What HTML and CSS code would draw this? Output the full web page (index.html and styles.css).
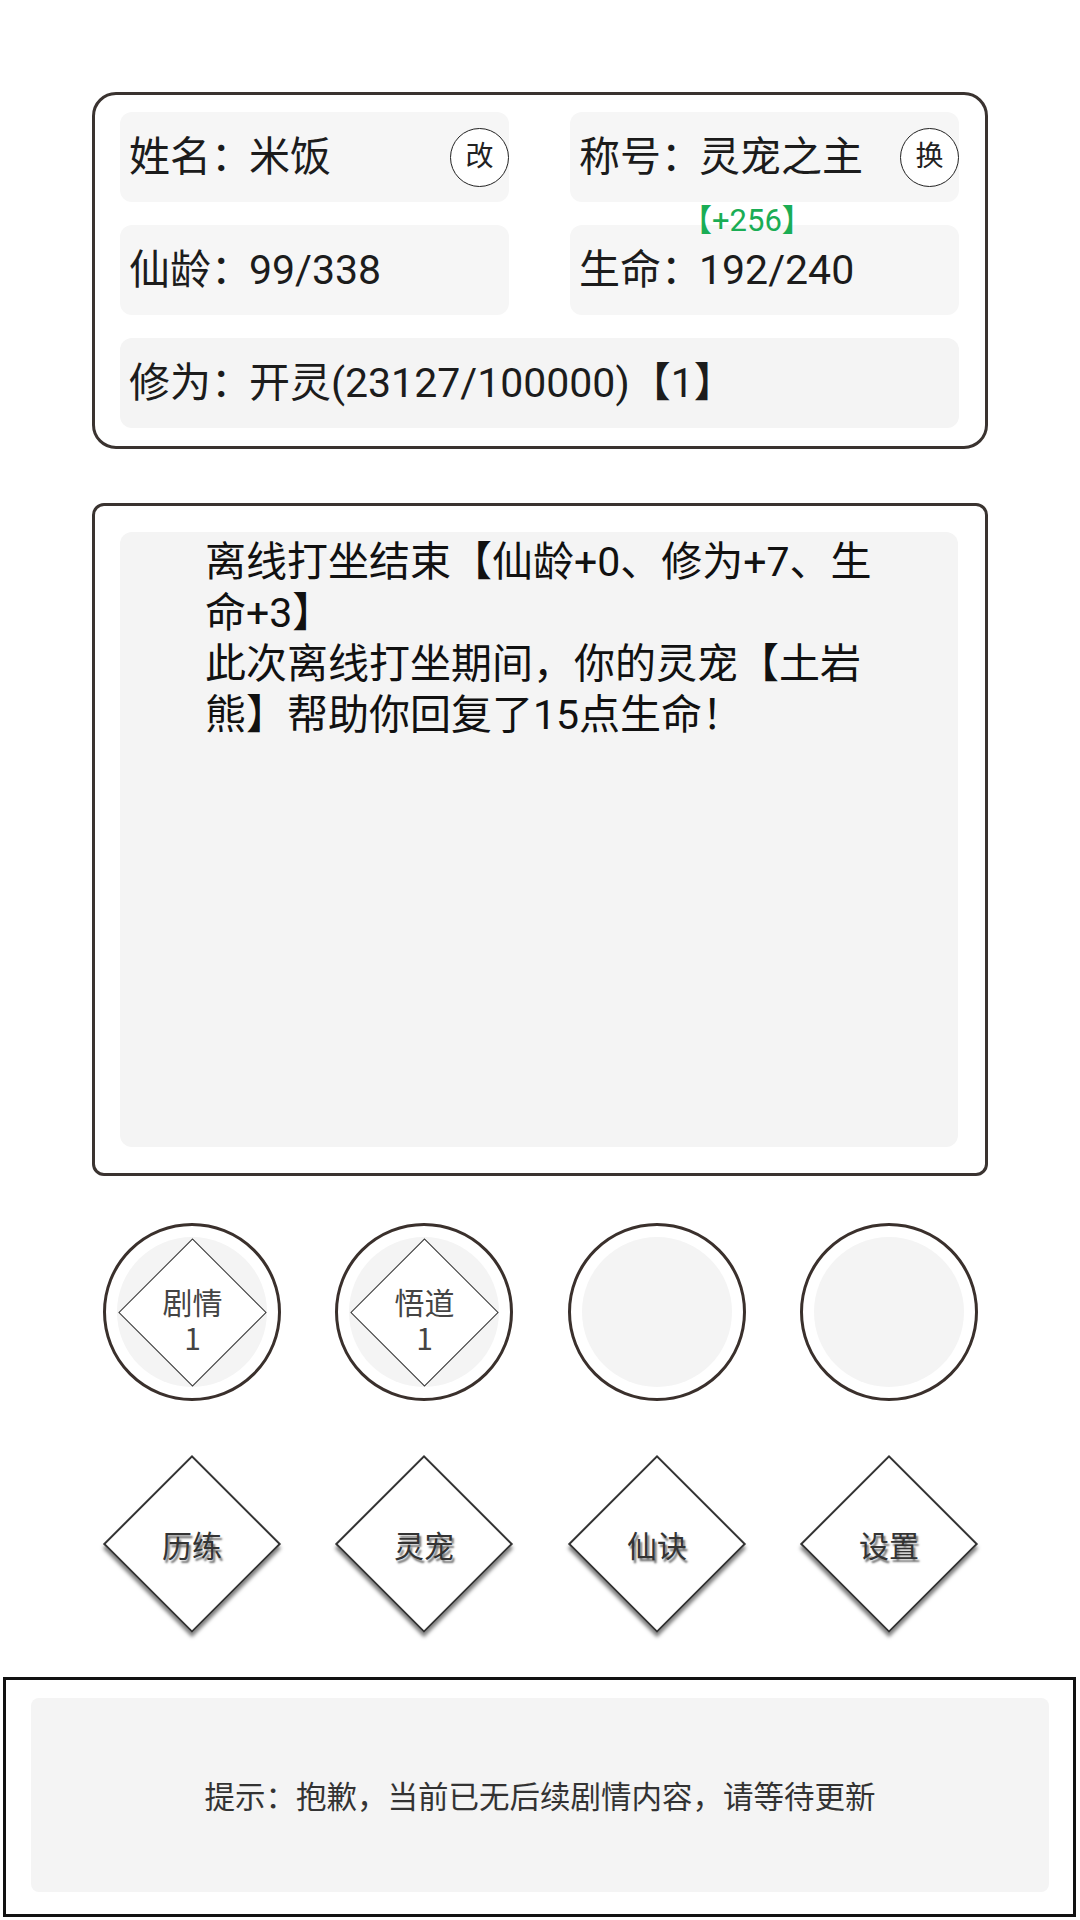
FILE: index.html
```html
<!DOCTYPE html>
<html lang="zh-CN">
<head>
<meta charset="utf-8">
<title>修仙</title>
<link rel="stylesheet" href="styles.css">
</head>
<body>
<div class="page">
  <section class="info-card">
    <div class="cell">
      <span class="label">姓名<span class="colon">：</span>米饭</span>
      <span class="mini-btn">改</span>
    </div>
    <div class="cell">
      <span class="label">称号<span class="colon">：</span>灵宠之主</span>
      <span class="mini-btn">换</span>
    </div>
    <div class="cell">
      <span class="label">仙龄<span class="colon">：</span>99/338</span>
    </div>
    <div class="cell cell-life">
      <span class="bonus">【+256】</span>
      <span class="label">生命<span class="colon">：</span>192/240</span>
    </div>
    <div class="cell cell-wide">
      <span class="label">修为<span class="colon">：</span>开灵(23127/100000)【1】</span>
    </div>
  </section>

  <section class="log-card">
    <div class="log-inner">
      <div class="log-text">
        <p>离线打坐结束【仙龄+0、修为+7、生命+3】</p>
        <p>此次离线打坐期间，你的灵宠【土岩熊】帮助你回复了15点生命！</p>
      </div>
    </div>
  </section>

  <div class="ring-row">
    <div class="ring">
      <div class="disk">
        <div class="gem"><div class="gem-text"><span>剧情</span><span>1</span></div></div>
      </div>
    </div>
    <div class="ring">
      <div class="disk">
        <div class="gem"><div class="gem-text"><span>悟道</span><span>1</span></div></div>
      </div>
    </div>
    <div class="ring"><div class="disk"></div></div>
    <div class="ring"><div class="disk"></div></div>
  </div>

  <div class="menu-row">
    <div class="menu-item"><div class="menu-diamond"><span class="menu-label">历练</span></div></div>
    <div class="menu-item"><div class="menu-diamond"><span class="menu-label">灵宠</span></div></div>
    <div class="menu-item"><div class="menu-diamond"><span class="menu-label">仙诀</span></div></div>
    <div class="menu-item"><div class="menu-diamond"><span class="menu-label">设置</span></div></div>
  </div>

  <section class="tip-box">
    <div class="tip-inner">提示：抱歉，当前已无后续剧情内容，请等待更新</div>
  </section>
</div>
</body>
</html>
```

FILE: styles.css
```css
* {
  box-sizing: border-box;
}

html, body {
  margin: 0;
  padding: 0;
  background: #ffffff;
}

body {
  width: 1080px;
  height: 1920px;
  overflow: hidden;
  font-family: Roboto, "Noto Sans CJK SC", sans-serif;
  color: #1c1c1c;
}

.page {
  padding-top: 92px;
}

/* ---------- info card ---------- */
.info-card {
  margin: 0 92px;
  width: 896px;
  border: 3px solid #3a3330;
  border-radius: 24px;
  padding: 17px 26px 18px 25px;
  display: grid;
  grid-template-columns: 389px 389px;
  grid-auto-rows: 90px;
  column-gap: 61px;
  row-gap: 23px;
}

.cell {
  position: relative;
  background: #f6f6f6;
  border-radius: 12px;
  padding-left: 9px;
  display: flex;
  align-items: center;
  justify-content: space-between;
}

.cell-wide {
  grid-column: 1 / 3;
  background: #f4f4f4;
}

.label {
  font-size: 41px;
  line-height: 50px;
  white-space: nowrap;
}

.colon {
  letter-spacing: -3px;
}

.mini-btn {
  width: 59px;
  height: 59px;
  border: 1.5px solid #222;
  border-radius: 50%;
  font-size: 28px;
  line-height: 56px;
  text-align: center;
  color: #222;
  background: #ffffff;
}

.bonus {
  position: absolute;
  left: 111px;
  top: -20px;
  font-size: 31px;
  line-height: 31px;
  color: #1aad55;
  white-space: nowrap;
}

/* ---------- log card ---------- */
.log-card {
  margin: 54px 92px 0;
  width: 896px;
  height: 673px;
  border: 3px solid #3a3330;
  border-radius: 12px;
  padding: 26px 27px 26px 25px;
}

.log-inner {
  height: 100%;
  background: #f4f4f4;
  border-radius: 12px;
  padding: 5px 0 0 85px;
}

.log-text {
  width: 684px;
  font-size: 41px;
  line-height: 51px;
  color: #111;
}

.log-text p {
  margin: 0;
}

/* ---------- ring buttons ---------- */
.ring-row {
  margin-top: 47px;
  padding-left: 103px;
  display: flex;
  gap: 54.3px;
}

.ring {
  width: 178px;
  height: 178px;
  border: 3px solid #3a302c;
  border-radius: 50%;
  display: flex;
  align-items: center;
  justify-content: center;
}

.disk {
  width: 150px;
  height: 150px;
  border-radius: 50%;
  background: #f4f4f4;
  display: flex;
  align-items: center;
  justify-content: center;
}

.gem {
  width: 105px;
  height: 105px;
  background: #ffffff;
  border: 1.5px solid #333;
  transform: rotate(45deg);
  display: flex;
  align-items: center;
  justify-content: center;
}

.gem-text {
  transform: rotate(-45deg);
  display: flex;
  flex-direction: column;
  align-items: center;
  font-size: 30px;
  line-height: 36px;
  color: #444;
  margin: 8px 0 0 8px;
  font-family: "Noto Sans CJK SC", sans-serif;
}

/* ---------- menu diamonds ---------- */
.menu-row {
  margin-top: 54px;
  padding-left: 103px;
  display: flex;
  gap: 54.3px;
}

.menu-item {
  width: 178px;
  height: 178px;
  display: flex;
  align-items: center;
  justify-content: center;
}

.menu-diamond {
  width: 126px;
  height: 126px;
  background: #ffffff;
  border: 2px solid #333;
  box-shadow: 3px 3px 4px rgba(0, 0, 0, 0.5);
  transform: rotate(45deg);
  display: flex;
  align-items: center;
  justify-content: center;
}

.menu-label {
  transform: rotate(-45deg);
  font-size: 30px;
  font-weight: 400;
  color: #333;
  text-shadow: 2px 3px 2px rgba(0, 0, 0, 0.55);
  white-space: nowrap;
  font-family: "Noto Sans CJK SC", sans-serif;
}

/* ---------- tip box ---------- */
.tip-box {
  margin: 44px 0 0 3px;
  width: 1073px;
  height: 240px;
  border: 3px solid #111;
  padding: 18px 24px 22px 25px;
}

.tip-inner {
  height: 100%;
  background: #f4f4f4;
  border-radius: 8px;
  display: flex;
  align-items: center;
  justify-content: center;
  font-size: 30.5px;
  color: #333;
  font-family: "Noto Sans CJK SC", sans-serif;
}
```
